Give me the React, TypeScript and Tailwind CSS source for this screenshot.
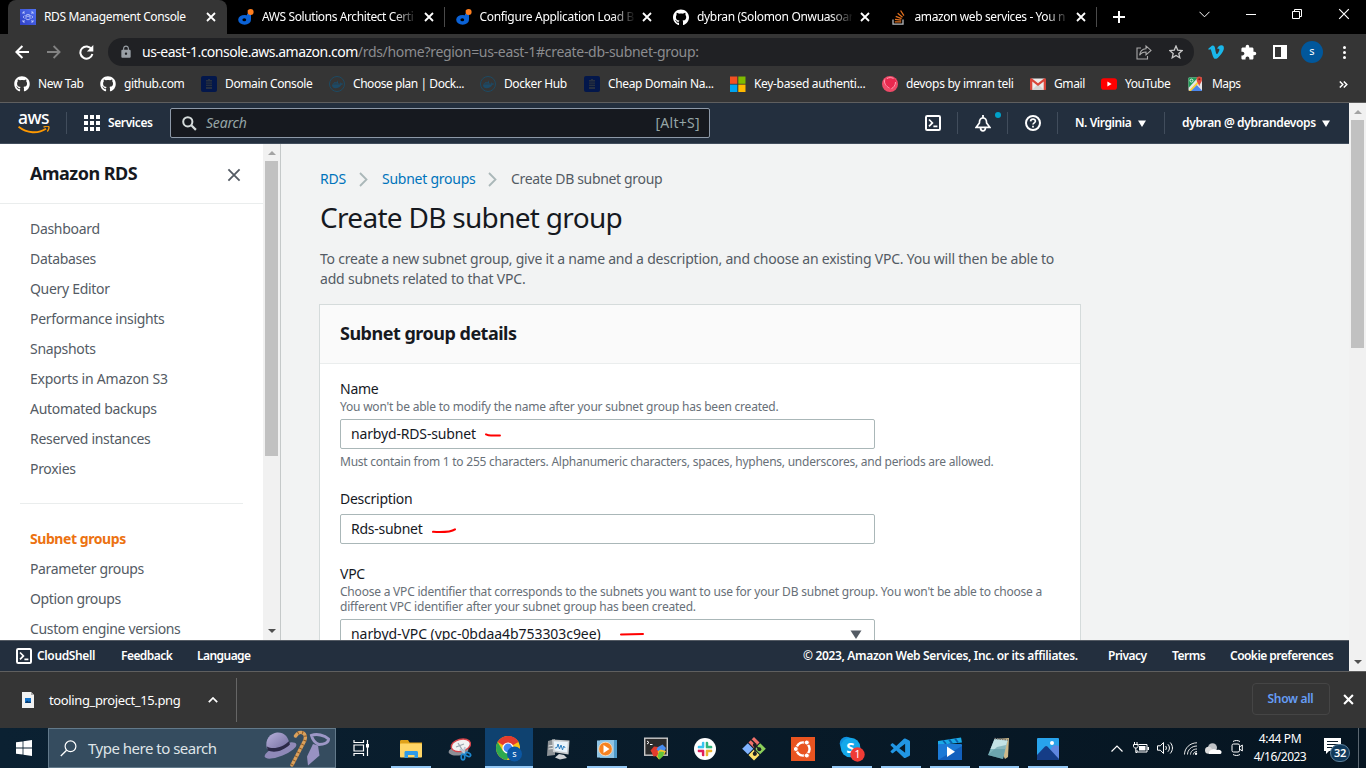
import React from "react";
import { FaGithub, FaDocker, FaVimeoV, FaStackOverflow } from "react-icons/fa";
import { MdExtension, MdLock } from "react-icons/md";
import { VscVscode } from "react-icons/vsc";

/* ---------- small shared glyphs ---------- */

const Close = ({ s = 10, w = 1.8, c = "#fff" }: { s?: number; w?: number; c?: string }) => (
  <svg width={s} height={s} viewBox="0 0 10 10" className="shrink-0">
    <path d="M1 1l8 8M9 1l-8 8" stroke={c} strokeWidth={w} fill="none" />
  </svg>
);

const ShellIcon = () => (
  <svg width="16" height="16" viewBox="0 0 16 16" className="shrink-0">
    <rect x="1" y="1" width="14" height="14" rx="1.2" fill="none" stroke="#fff" strokeWidth="2" />
    <path d="M4 4.5l3.4 3.4L4 11.3M8.4 11.4h4" fill="none" stroke="#fff" strokeWidth="1.7" />
  </svg>
);

const Caret = () => (
  <svg width="8" height="7" viewBox="0 0 8 7" className="shrink-0">
    <path d="M0 .5h8L4 7z" fill="#fff" />
  </svg>
);

const RdsFavicon = () => (
  <svg width="16" height="16" viewBox="0 0 16 16">
    <defs>
      <linearGradient id="rds" x1="0" y1="1" x2="1" y2="0">
        <stop offset="0" stopColor="#2e3fc4" />
        <stop offset="1" stopColor="#5272f2" />
      </linearGradient>
    </defs>
    <rect width="16" height="16" fill="url(#rds)" />
    <g fill="none" stroke="#c9d3ff" strokeWidth=".8">
      <path d="M3 5V3h2M3 3l1.6 1.6M13 5V3h-2M13 3l-1.6 1.6M3 11v2h2M3 13l1.6-1.6M13 11v2h-2M13 13l-1.6-1.6" />
      <ellipse cx="8" cy="6.4" rx="2" ry=".9" />
      <path d="M6 6.4v3.4c0 1.2 4 1.2 4 0V6.4M4.4 6.6L3.2 8l1.2 1.4M11.6 6.6L12.8 8l-1.2 1.4" />
    </g>
  </svg>
);

const OceanFavicon = () => (
  <svg width="16" height="16" viewBox="0 0 16 16">
    <ellipse cx="6.6" cy="10.8" rx="6.4" ry="4.9" fill="#0b62d6" />
    <path d="M9 4.5l4 1v5H9z" fill="#0b62d6" />
    <ellipse cx="6.3" cy="10.8" rx="1.9" ry="1.5" fill="#000" />
    <circle cx="12.6" cy="3" r="3" fill="#ff7f1f" />
    <path d="M9.4 1.2l3 1.2-.6 2.4z" fill="#ff7f1f" />
  </svg>
);

const StackFavicon = () => (
  <svg width="16" height="16" viewBox="0 0 16 16">
    <path d="M2 10.500v4.700h10v-4.700" stroke="#b9bbbe" strokeWidth="1.300" fill="none" />
    <path d="M3.800 12.800h6.400M4 10.300l6.200.9M4.700 7.400l5.900 2.200M6.700 4.300l4.800 4M9.600 1.500l3.300 5.200" stroke="#e0701f" strokeWidth="1.300" />
  </svg>
);

/* ---------- browser chrome ---------- */

const tabs = [
  { icon: <OceanFavicon />, title: "AWS Solutions Architect Certi", track: "tracking-[-0.4px]" },
  { icon: <OceanFavicon />, title: "Configure Application Load B", track: "tracking-[-0.33px]" },
  { icon: <FaGithub size={17} color="#fff" />, title: "dybran (Solomon Onwuasoar", track: "tracking-[-0.33px]" },
  { icon: <StackFavicon />, title: "amazon web services - You n", track: "tracking-[-0.4px]" },
];

const TabStrip = () => (
  <div className="flex h-[34px] bg-black pl-2">
    <div className="flex h-full w-[219px] shrink-0 items-center rounded-t-lg bg-[#353535] pl-3">
      <RdsFavicon />
      <span className="ml-2 w-[162px] whitespace-nowrap text-xs tracking-[-0.37px] text-white">RDS Management Console</span>
      <Close />
    </div>
    {tabs.map((t, i) => (
      <div key={i} className="flex h-full w-[217.5px] shrink-0 items-center pl-[11px]">
        <span className="flex w-4 justify-center">{t.icon}</span>
        <span
          className={`${t.track} ml-2 mr-2 w-[155px] whitespace-nowrap text-xs text-white [mask-image:linear-gradient(to_right,#000_86%,transparent_101%)]`}
        >
          {t.title}
        </span>
        <Close />
        <span className="ml-[10px] h-5 w-px bg-[#4a4a4a]" />
      </div>
    ))}
    <div className="flex flex-1 items-center justify-between pl-[16px] pr-[16px]">
      <svg width="12" height="12" viewBox="0 0 12 12">
        <path d="M6 0v12M0 6h12" stroke="#fff" strokeWidth="2" />
      </svg>
      <div className="flex -translate-y-[3px] items-center gap-[36px]">
        <svg width="11" height="7" viewBox="0 0 11 7">
          <path d="M.5.8l5 5 5-5" stroke="#fff" strokeWidth="1" fill="none" />
        </svg>
        <svg width="10" height="10" viewBox="0 0 10 10">
          <path d="M0 5.5h10" stroke="#fff" />
        </svg>
        <svg width="10" height="10" viewBox="0 0 10 10">
          <path d="M.5 2.5h7v7h-7zM2.5 2.5v-2h7v7h-2" stroke="#fff" fill="none" />
        </svg>
        <Close w={1} s={12} />
      </div>
    </div>
  </div>
);

const Toolbar = () => (
  <div className="flex h-9 items-center bg-[#353535] pl-[15px] text-white">
    <svg width="14" height="14" viewBox="0 0 14 14">
      <path d="M14 7H1.6M7.4 1L1.4 7l6 6" stroke="#fff" strokeWidth="2" fill="none" />
    </svg>
    <svg width="14" height="14" viewBox="0 0 14 14" className="ml-[18px]">
      <path d="M0 7h12.4M6.6 1l6 6-6 6" stroke="#838383" strokeWidth="1.8" fill="none" />
    </svg>
    <svg width="15" height="15" viewBox="0 0 15 15" className="ml-[18px]">
      <path d="M12.6 4.2A6.1 6.1 0 1 0 13.4 9" stroke="#fff" strokeWidth="2" fill="none" />
      <path d="M14.3 0v6.4H7.9z" fill="#fff" />
    </svg>
    <div className="ml-[14px] flex h-7 w-[1086px] items-center rounded-full bg-[#202124] pl-[11px] pr-[11px]">
      <MdLock size={14} color="#9aa0a6" />
      <div className="ml-[9px] flex-1 whitespace-nowrap text-sm">
        <span className="tracking-[-0.5px]">us-east-1.console.aws.amazon.com</span>
        <span className="tracking-[-0.3px] text-[#8b8c8f]">/rds/home?region=us-east-1#create-db-subnet-group:</span>
      </div>
      <svg width="16" height="16" viewBox="0 0 16 16">
        <path d="M5 4H1v11h10.5v-3" stroke="#aaa" strokeWidth="1.1" fill="none" />
        <path d="M3.6 11.2C4 7.2 6.4 5 10 4.8V1.9L15 6.4l-5 4.4V8C7 8 5 9 3.6 11.2z" stroke="#aaa" strokeWidth="1.1" fill="none" />
      </svg>
      <svg width="14" height="14" viewBox="0 0 14 14" className="ml-[17px]">
        <path d="M7 1l1.7 4.1 4.5.4-3.4 2.9 1 4.4L7 10.5l-3.8 2.3 1-4.4L.8 5.5l4.5-.4z" stroke="#c8c8c8" strokeWidth="1.3" fill="none" />
      </svg>
    </div>
    <FaVimeoV size={18} color="#1ab7ea" className="ml-[13px]" />
    <MdExtension size={17} className="ml-[15px]" />
    <svg width="14" height="14" viewBox="0 0 14 14" className="ml-[16px]">
      <path d="M0 0h14v14H0zM2 2v10h6V2z" fill="#fff" fillRule="evenodd" />
    </svg>
    <span className="ml-[14px] flex h-[22px] w-[22px] items-center justify-center rounded-full bg-[#01579b] pb-0.5 text-[11px]">s</span>
    <span className="ml-[20px] flex flex-col gap-0.5">
      <i className="h-[3px] w-[3px] rounded-full bg-white" />
      <i className="h-[3px] w-[3px] rounded-full bg-white" />
      <i className="h-[3px] w-[3px] rounded-full bg-white" />
    </span>
  </div>
);

const DomainIcon = () => (
  <svg width="16" height="16" viewBox="0 0 16 16">
    <rect width="16" height="16" rx="2" fill="#03174b" />
    <path d="M5 4h6v9H5zM7 3h2v1H7z" fill="#283142" />
    <path d="M5 6h6M5 8.2h6M5 10.5h6" stroke="#0b1a3d" />
  </svg>
);

const DockerIcon = () => (
  <span className="flex h-4 w-4 items-center justify-center rounded-full border border-[#1d4a63]">
    <FaDocker size={11} color="#1d4a66" />
  </span>
);

const MicrosoftIcon = () => (
  <svg width="16" height="16" viewBox="0 0 16 16">
    <path d="M0 .5h7.3v7.3H0z" fill="#f25022" />
    <path d="M8.3.5h7.2v7.3H8.3z" fill="#7fba00" />
    <path d="M0 8.6h7.3V16H0z" fill="#00a4ef" />
    <path d="M8.3 8.6h7.2V16H8.3z" fill="#ffb900" />
  </svg>
);

const PinkBall = () => (
  <svg width="16" height="16" viewBox="0 0 16 16">
    <circle cx="8" cy="8" r="8" fill="#f04a68" />
    <circle cx="8.600" cy="6.800" r="5.600" fill="#e9284e" />
    <path d="M2.400 3.600C2 7 4 10.500 7.500 12M13.500 6c0 3-1.500 5.500-4 6.500M5 2.500c2-1.200 4.500-1.200 6.500 0" stroke="#ff9fb3" strokeWidth="1" fill="none" />
  </svg>
);

const GmailIcon = () => (
  <svg width="16" height="16" viewBox="0 0 16 16">
    <rect x="1" y="2.5" width="14" height="11.5" rx="1" fill="#ececec" />
    <path d="M2 14l6-6 6 6z" fill="#d4d4d4" />
    <path d="M0 3.6v9.6c0 .6.4.9 1 .9h1.3V5.6L8 10l5.700-4.400v8.500H15c.6 0 1-.4 1-.9V3.600c0-1.200-1-1.500-2-1.100L8 7.200 2 2.500c-1-.4-2-.1-2 1.100z" fill="#d9453a" />
  </svg>
);

const YoutubeIcon = () => (
  <svg width="16" height="16" viewBox="0 0 16 16">
    <rect y="2.300" width="16" height="11.400" rx="2.800" fill="#f00" />
    <path d="M6.400 5.600v4.800L10.600 8z" fill="#fff" />
  </svg>
);

const MapsIcon = () => (
  <svg width="16" height="16" viewBox="0 0 16 16">
    <rect x=".5" y="1.500" width="13.500" height="13.500" rx="1" fill="#e6e6e6" />
    <path d="M.5 2c0-.4.3-.5.6-.5H10L.5 12z" fill="#1f9d58" />
    <path d="M1.500 15L8 8.300l6 6.200c-.3.400-.5.500-1 .5z" fill="#4a86ee" />
    <path d="M1 14.800L12 3l1.500 1.500L3 15H1.500z" fill="#fbce32" />
    <path d="M4 15l4.200-4.400L12.500 15z" fill="#4a86ee" />
    <path d="M11.200 10.500C10.800 7.500 8.500 6.200 8.500 3.300a2.800 2.800 0 0 1 5.600 0c0 2.900-2.400 4.200-2.900 7.200z" fill="#dc4a3d" />
    <circle cx="11.300" cy="3.300" r="1" fill="#7a1d14" />
    <circle cx="3.500" cy="4.600" r="1.500" fill="none" stroke="#fff" strokeWidth=".8" />
  </svg>
);

const bookmarks = [
  { icon: <FaGithub size={16} />, text: "New Tab", cls: "w-[86px] tracking-[-0.35px]" },
  { icon: <FaGithub size={16} />, text: "github.com", cls: "w-[101px] tracking-[-0.42px]" },
  { icon: <DomainIcon />, text: "Domain Console", cls: "w-[128px] tracking-[-0.38px]" },
  { icon: <DockerIcon />, text: "Choose plan | Dock...", cls: "w-[151px] tracking-[-0.45px]" },
  { icon: <DockerIcon />, text: "Docker Hub", cls: "w-[104px] tracking-[-0.4px]" },
  { icon: <DomainIcon />, text: "Cheap Domain Na...", cls: "w-[146px] tracking-[-0.36px]" },
  { icon: <MicrosoftIcon />, text: "Key-based authenti...", cls: "w-[152px] tracking-[-0.33px]" },
  { icon: <PinkBall />, text: "devops by imran teli", cls: "w-[148px] tracking-[-0.3px]" },
  { icon: <GmailIcon />, text: "Gmail", cls: "w-[71px] tracking-[-0.4px]" },
  { icon: <YoutubeIcon />, text: "YouTube", cls: "w-[87px] tracking-[-0.46px]" },
  { icon: <MapsIcon />, text: "Maps", cls: "w-[100px] tracking-[-0.55px]" },
];

const Bookmarks = () => (
  <div className="flex h-[33px] items-center border-b border-[#5f5f5f] bg-[#353535] pb-1 pl-3.5 text-xs text-white">
    {bookmarks.map((b, i) => (
      <div key={i} className={`${b.cls} flex shrink-0 items-center gap-2 whitespace-nowrap`}>
        {b.icon}
        <span>{b.text}</span>
      </div>
    ))}
    <svg width="9" height="7" viewBox="0 0 9 7" className="ml-[51px]">
      <path d="M.8.500l3 3-3 3M4.800.500l3 3-3 3" stroke="#fff" strokeWidth="1.500" fill="none" />
    </svg>
  </div>
);

/* ---------- AWS console ---------- */

const Sep = ({ cls }: { cls: string }) => <span className={`${cls} h-[22px] w-px shrink-0 bg-[#414d5c]`} />;

const ConsoleNav = () => (
  <div className="flex h-[41px] items-center border-b border-[#414d5c] bg-[#232f3e] pl-[18px] text-xs font-semibold text-white">
    <div className="flex w-[31px] flex-col items-center">
      <span className="h-[14px] text-[17.5px] font-medium leading-[11px] tracking-[-0.6px]">aws</span>
      <svg width="32" height="8" viewBox="0 0 32 8">
        <path d="M.5.800C9 7.500 20 8 28 2.800" stroke="#f90" strokeWidth="1.900" fill="none" />
        <path d="M25.500 1.200C28 .2 30.500.300 30.900.900 31.300 1.600 30.500 4.200 29.300 5.500" stroke="#f90" strokeWidth="1.300" fill="none" />
      </svg>
    </div>
    <Sep cls="ml-[17px]" />
    <svg width="16" height="16" viewBox="0 0 16 16" className="ml-[17px]">
      {[0, 6, 12].map((y) => [0, 6, 12].map((x) => <rect key={`${x}-${y}`} x={x} y={y} width="4" height="4" fill="#fff" />))}
    </svg>
    <span className="ml-2 w-[45px] tracking-[-0.4px]">Services</span>
    <div className="ml-[17px] flex h-[30px] w-[540px] items-center rounded-[2px] border border-[#8d99a8] bg-[#16191f] pl-[11px] pr-[9px] text-sm font-normal text-[#95a5a6]">
      <svg width="15" height="15" viewBox="0 0 15 15">
        <circle cx="5.800" cy="5.800" r="4.600" stroke="#d5dbdb" strokeWidth="2" fill="none" />
        <path d="M9.300 9.300l4.600 4.600" stroke="#d5dbdb" strokeWidth="2.200" />
      </svg>
      <span className="ml-[9px] flex-1 italic tracking-[-0.2px]">Search</span>
      <span className="tracking-[0.3px]">[Alt+S]</span>
    </div>
    <div className="flex flex-1 items-center pl-[215px]">
      <ShellIcon />
      <Sep cls="ml-[16px]" />
      <span className="relative ml-[17px]">
        <svg width="16" height="17" viewBox="0 0 16 17">
          <path d="M1.200 12.300h13.600L11.600 8C11.600 5.200 10.500 3 8 3S4.400 5.200 4.400 8z" fill="none" stroke="#fff" strokeWidth="1.700" />
          <path d="M8 0v3M5.600 13c0 3.800 4.800 3.800 4.800 0" stroke="#fff" strokeWidth="1.800" fill="none" />
        </svg>
        <i className="absolute -top-[3px] left-[20px] h-1.5 w-1.5 rounded-full bg-[#00a1c9]" />
      </span>
      <Sep cls="ml-[16px]" />
      <svg width="16" height="16" viewBox="0 0 16 16" className="ml-[17px] shrink-0">
        <circle cx="8" cy="8" r="7" fill="none" stroke="#fff" strokeWidth="2" />
        <path d="M5.600 6.400C5.700 3.400 10.500 3.400 10.400 6.300 10.300 7.800 8 7.900 8 9.600M8 10.700v1.700" stroke="#fff" strokeWidth="1.700" fill="none" />
      </svg>
      <Sep cls="ml-[16px]" />
      <span className="ml-[17px] w-[63px] whitespace-nowrap tracking-[-0.42px]">N. Virginia</span>
      <Caret />
      <Sep cls="ml-[18px]" />
      <span className="ml-[17px] w-[140px] whitespace-nowrap tracking-[-0.35px]">dybran @ dybrandevops</span>
      <Caret />
    </div>
  </div>
);

const nav1 = [
  "Dashboard",
  "Databases",
  "Query Editor",
  "Performance insights",
  "Snapshots",
  "Exports in Amazon S3",
  "Automated backups",
  "Reserved instances",
  "Proxies",
];
const nav2 = ["Subnet groups", "Parameter groups", "Option groups", "Custom engine versions"];

const Arrow = ({ up, c }: { up?: boolean; c: string }) => (
  <svg width="8" height="4" viewBox="0 0 8 4">
    <path d={up ? "M0 4h8L4 0z" : "M0 0h8L4 4z"} fill={c} />
  </svg>
);

const Sidebar = () => (
  <div className="flex w-[281px] shrink-0 border-r border-[#c5c9c9] bg-white">
    <div className="w-[263px] overflow-hidden">
      <div className="flex h-[60px] items-center justify-between border-b border-[#eaeded] pl-[30px] pr-[22px]">
        <span className="pb-0.5 text-lg font-bold tracking-[-0.5px] text-[#16191f]">Amazon RDS</span>
        <span className="pt-0.5">
          <Close s={14} w={1.300} c="#545b64" />
        </span>
      </div>
      <div className="flex flex-col gap-2.5 pl-[30px] pt-[15px] text-sm leading-5 tracking-[-0.31px] text-[#545b64]">
        {nav1.map((t) => (
          <span key={t} className={t.startsWith("Exports") ? "tracking-[-0.23px]" : ""}>
            {t}
          </span>
        ))}
      </div>
      <div className="mx-5 mt-6 h-px bg-[#eaeded]" />
      <div className="flex flex-col gap-2.5 pl-[30px] pt-[25px] text-sm leading-5 tracking-[-0.36px] text-[#545b64]">
        {nav2.map((t, i) => (
          <span key={t} className={i === 0 ? "font-bold tracking-[-0.43px] text-[#ec7211]" : ""}>
            {t}
          </span>
        ))}
      </div>
    </div>
    <div className="flex w-[17px] flex-col items-center justify-between bg-[#f1f1f1] py-[7px]">
      <div className="flex flex-col items-center gap-1.5">
        <Arrow up c="#a3a3a3" />
        <div className="h-[295px] w-[13px] bg-[#c1c1c1]" />
      </div>
      <Arrow c="#505050" />
    </div>
  </div>
);

const Chevron = ({ cls }: { cls: string }) => (
  <svg width="9" height="15" viewBox="0 0 9 15" className={cls}>
    <path d="M1 1l6.500 6.500L1 14" stroke="#aab7b8" strokeWidth="1.800" fill="none" />
  </svg>
);

const Label = ({ children }: { children: string }) => (
  <div className="text-sm leading-5 tracking-[-0.26px] text-[#16191f]">{children}</div>
);
const Hint = ({ children, cls = "tracking-[-0.21px]" }: { children: React.ReactNode; cls?: string }) => (
  <div className={`${cls} whitespace-nowrap text-xs leading-[15px] text-[#687078]`}>{children}</div>
);

const field =
  "flex h-[30px] w-[535px] items-center rounded-[2px] border border-[#aab7b8] bg-white pl-2.5 text-sm text-[#16191f]";

const Main = () => (
  <div className="flex-1 overflow-hidden bg-[#f2f3f3] pl-[38px] text-[#16191f]">
    <div className="ml-px mt-[25px] flex h-5 items-center whitespace-nowrap text-sm leading-5 text-[#0073bb]">
      <span className="w-[26px] tracking-[-0.26px]">RDS</span>
      <Chevron cls="ml-[13px] mr-[14px]" />
      <span className="w-[93px] tracking-[-0.25px]">Subnet groups</span>
      <Chevron cls="ml-[13px] mr-[14px]" />
      <span className="tracking-[-0.34px] text-[#545b64]">Create DB subnet group</span>
    </div>
    <h1 className="ml-px mt-[10px] text-[28px] font-normal leading-9 tracking-[-0.7px]">Create DB subnet group</h1>
    <p className="ml-px mt-[14px] whitespace-nowrap text-sm leading-5 tracking-[-0.22px] text-[#545b64]">
      To create a new subnet group, give it a name and a description, and choose an existing VPC. You will then be able to
      <br />
      <span className="tracking-[-0.19px]">add subnets related to that VPC.</span>
    </p>
    <div className="mt-[15px] h-[500px] w-[762px] border border-[#d5dbdb] bg-white">
      <div className="flex h-[59px] items-center border-b border-[#eaeded] bg-[#fafafa] pb-0.5 pl-5 text-lg font-bold tracking-[-0.5px]">
        Subnet group details
      </div>
      <div className="px-5 pt-[15px]">
        <Label>Name</Label>
        <Hint>You won't be able to modify the name after your subnet group has been created.</Hint>
        <div className={`${field} mt-[5px]`}>
          <span className="tracking-[-0.16px]">narbyd-RDS-subnet</span>
          <svg width="16" height="4" viewBox="0 0 16 4" className="ml-[9px] mt-[2px]">
            <path d="M1 1.300c2 1 3 1.200 5 1.200h9" stroke="#f00" strokeWidth="1.900" strokeLinecap="round" fill="none" />
          </svg>
        </div>
        <div className="mt-[5px]">
          <Hint cls="tracking-[-0.24px]">
            Must contain from 1 to 255 characters. Alphanumeric characters, spaces, hyphens, underscores, and periods are allowed.
          </Hint>
        </div>
        <div className="mt-5">
          <Label>Description</Label>
        </div>
        <div className={`${field} mt-[5px]`}>
          <span className="tracking-[-0.26px]">Rds-subnet</span>
          <svg width="24" height="7" viewBox="0 0 24 7" className="ml-[9px] mt-[2px]">
            <path d="M1 4.800c6 .3 17 .9 22-2.500" stroke="#f00" strokeWidth="2" strokeLinecap="round" fill="none" />
          </svg>
        </div>
        <div className="mt-5">
          <Label>VPC</Label>
        </div>
        <Hint>
          Choose a VPC identifier that corresponds to the subnets you want to use for your DB subnet group. You won't be able to
          choose a
          <br />
          different VPC identifier after your subnet group has been created.
        </Hint>
        <div className={`${field} mt-[5px] pr-3`}>
          <span className="tracking-[-0.06px]">narbyd-VPC (vpc-0bdaa4b753303c9ee)</span>
          <svg width="24" height="4" viewBox="0 0 24 4" className="ml-[19px]">
            <path d="M1 2.400L23 2" stroke="#f00" strokeWidth="2" strokeLinecap="round" />
          </svg>
          <svg width="12" height="9" viewBox="0 0 12 9" className="ml-auto">
            <path d="M.5.500h11L6 9z" fill="#545b64" />
          </svg>
        </div>
      </div>
    </div>
  </div>
);

const ConsoleFooter = () => (
  <div className="flex h-[31px] items-center border-t border-[#545b64] bg-[#232f3e] pl-4 text-xs font-semibold text-white">
    <ShellIcon />
    <span className="ml-[5px] w-[59px] tracking-[-0.36px]">CloudShell</span>
    <span className="ml-[25px] w-[51px] tracking-[-0.55px]">Feedback</span>
    <span className="ml-[25px] flex-1 tracking-[-0.55px]">Language</span>
    <span className="w-[275px] whitespace-nowrap tracking-[-0.34px]">© 2023, Amazon Web Services, Inc. or its affiliates.</span>
    <span className="ml-[30px] w-[39px] tracking-[-0.5px]">Privacy</span>
    <span className="ml-[25px] w-[33px] tracking-[-0.5px]">Terms</span>
    <span className="ml-[25px] w-[119px] whitespace-nowrap tracking-[-0.53px]">Cookie preferences</span>
  </div>
);

const PageScrollbar = () => (
  <div className="flex w-[17px] flex-col items-center justify-between bg-[#f1f1f1] py-[7px]">
    <div className="flex flex-col items-center gap-1.5">
      <Arrow up c="#a3a3a3" />
      <div className="h-[228px] w-[13px] bg-[#c1c1c1]" />
    </div>
    <Arrow c="#505050" />
  </div>
);

/* ---------- download shelf ---------- */

const Downloads = () => (
  <div className="flex h-[57px] items-center border-t border-[#5f5f5f] bg-[#353535] pl-[22px] text-white">
    <svg width="12" height="16" viewBox="0 0 12 16">
      <path d="M0 0h9l3 3v13H0z" fill="#f2f2f2" />
      <path d="M9 0l3 3H9z" fill="#aaa" />
      <path d="M3 6h6v5H3z" fill="#1673c8" />
      <path d="M3 11l2-2.500L7 10l1-1 1 2z" fill="#0b3a6b" />
    </svg>
    <span className="ml-[15px] w-[132px] pt-0.5 text-[13px] tracking-[-0.38px]">tooling_project_15.png</span>
    <svg width="10" height="6" viewBox="0 0 10 6" className="ml-[27px]">
      <path d="M.8 5.200L5 1l4.200 4.200" stroke="#fff" strokeWidth="1.700" fill="none" />
    </svg>
    <span className="ml-[18px] h-11 w-px bg-[#666]" />
    <span className="ml-auto mb-0.5 flex h-8 w-[78px] items-center justify-center rounded border border-[#454545] text-xs font-semibold tracking-[-0.3px] text-[#669df6]">
      Show all
    </span>
    <span className="mb-0.5 ml-[13px] mr-[12.5px] flex">
      <Close s={11} w={1.900} />
    </span>
  </div>
);

/* ---------- taskbar ---------- */

const FolderIcon = () => (
  <svg width="22" height="18" viewBox="0 0 22 18">
    <path d="M0 1.500C0 .7.500 0 1.200 0H8l1.600 2.500H22V9H0z" fill="#e0a21a" />
    <rect y="3.500" width="22" height="14" rx=".8" fill="#ffd667" />
    <path d="M4.500 18v-5.500c0-1 .6-1.500 1.500-1.500h10.500c.9 0 1.500.5 1.500 1.500V18h-3.500v-3H8v3z" fill="#2f9be8" />
  </svg>
);

const SnipIcon = () => (
  <svg width="24" height="24" viewBox="0 0 24 24">
    <ellipse cx="10.500" cy="14" rx="10" ry="4.500" fill="#8c8f96" transform="rotate(-8 10 14)" />
    <ellipse cx="13" cy="8.500" rx="9.800" ry="6" fill="#f2f2f2" stroke="#d8454b" strokeWidth="1.400" transform="rotate(-14 12 9)" />
    <path d="M8 10l8-3M10 6l5 8" stroke="#9aa4ae" strokeWidth="1.200" />
    <path d="M12 12l6 5M17 10l-2 8" stroke="#b9c8d6" strokeWidth="1.800" />
    <ellipse cx="15" cy="20" rx="1.800" ry="2.800" fill="none" stroke="#1c87cf" strokeWidth="1.700" />
    <ellipse cx="20" cy="17.500" rx="2.800" ry="1.800" fill="none" stroke="#1c87cf" strokeWidth="1.700" transform="rotate(30 20 17.500)" />
  </svg>
);

const ChromeIcon = () => (
  <svg width="26" height="26" viewBox="0 0 26 26">
    <circle cx="12" cy="12" r="12" fill="#fbc116" />
    <path d="M12 12L1.600 6A12 12 0 0 1 22.400 6z" fill="#e33b2e" />
    <path d="M12 0a12 12 0 0 1 10.400 6H12z" fill="#e33b2e" />
    <path d="M1.600 6a12 12 0 0 0 9 17.900L17 15l-10 0z" fill="#2da94f" />
    <circle cx="12" cy="12" r="5.600" fill="#fff" />
    <circle cx="12" cy="12" r="4.400" fill="#4285f4" />
    <circle cx="18.500" cy="18" r="7.500" fill="#0b57a4" />
    <text x="18.500" y="21" fontSize="9" fill="#fff" textAnchor="middle">s</text>
  </svg>
);

const PerfIcon = () => (
  <svg width="23" height="22" viewBox="0 0 23 22">
    <path d="M1 3l7-2v16l-8 1z" fill="#8d9296" />
    <path d="M1.500 8l5-.8M1.500 11l5-.6" stroke="#e6e6e6" />
    <path d="M5 1.500L22.500 2.500l-1 14L6 14z" fill="#c9ccce" />
    <path d="M6.800 3.200l14 .9-.8 10.400L7.500 12.500z" fill="#eaf4fb" />
    <path d="M8 10l2-.5 1-3.500 1.500 5 1.500-4 1.500 5 1.200-4 1.500 2" stroke="#2f7fbf" fill="none" />
    <path d="M12 16l5 1 3 3-7 1.500-5-2z" fill="#d0d3d6" />
  </svg>
);

const MediaIcon = () => (
  <svg width="20" height="20" viewBox="0 0 20 20">
    <path d="M3 1h17v18H3z" fill="#4e9ac9" />
    <path d="M0 1.500L17 1v18L0 18.500z" fill="#8fc4e4" />
    <circle cx="8.500" cy="10" r="6.800" fill="#f58220" stroke="#fde3c8" strokeWidth=".8" />
    <path d="M6.500 6l6 4-6 4z" fill="#fff" />
  </svg>
);

const TermIcon = () => (
  <svg width="24" height="24" viewBox="0 0 24 24">
    <rect x=".7" y="1.200" width="22.600" height="17" fill="#2c2c2c" stroke="#c9c9c9" strokeWidth="1.400" />
    <path d="M3 4l2 1.500L3 7M6 7.500h2.500" stroke="#fff" fill="none" />
    <path d="M6.500 13.500l3.500-4 4 .5 2.500 4-5.500 4.500z" fill="#e23b2c" />
    <path d="M14 10l4.500-2.500L22 11l-1.500 3.500-5 .5-3-2.500z" fill="#4a8df0" />
    <path d="M12.500 15.500l4-3 5.500 1.500-2 4-5 4.500-3.500-4z" fill="#f3c32b" />
    <path d="M15.500 14.500l4.500.5-.5 3.500-4 4-2-3.500z" fill="#63c53b" />
    <path d="M7 14l4-1 3.500 3-1.500 3-3.500.500z" fill="#e23b2c" />
  </svg>
);

const SlackIcon = () => (
  <svg width="22" height="22" viewBox="0 0 22 22">
    <circle cx="11" cy="11" r="11" fill="#fff" />
    <g strokeWidth="2.700" strokeLinecap="round">
      <path d="M9.200 5v3.800M5 9.200h4" stroke="#36c5f0" />
      <path d="M12.900 5v3.800M12.900 9.200H17" stroke="#2eb67d" />
      <path d="M12.900 17v-3.800M13 12.900h4" stroke="#ecb22e" />
      <path d="M9.200 17v-3.800M5 12.900h4" stroke="#e01e5a" />
    </g>
    <path d="M11 4.500v13M4.500 11h13" stroke="#fff" strokeWidth=".8" />
  </svg>
);

const GitIcon = () => (
  <svg width="24" height="24" viewBox="0 0 24 24">
    <path d="M12 0l5.500 5.500L12 11 6.500 5.500z" fill="#f0716b" />
    <path d="M5.800 6.200l5.500 5.500-5.500 5.600L.2 11.700z" fill="#80b3ff" />
    <path d="M18.200 6.200l5.600 5.500-5.600 5.600-5.500-5.600z" fill="#8ccf5a" />
    <path d="M12 12.400l5.500 5.600L12 23.600 6.500 18z" fill="#ffe16b" />
    <path d="M9 2.500l4 4v11M13 8l4.500 4.500" stroke="#1c1f24" strokeWidth="1.500" fill="none" />
    <circle cx="12.800" cy="8" r="2" fill="#1c1f24" />
    <circle cx="17.300" cy="12.300" r="2" fill="#1c1f24" />
    <circle cx="12.800" cy="16.800" r="2.100" fill="#1c1f24" />
  </svg>
);

const UbuntuIcon = () => (
  <svg width="24" height="24" viewBox="0 0 24 24">
    <rect width="24" height="24" fill="#e95420" />
    <circle cx="12" cy="12" r="6.600" fill="none" stroke="#fff" strokeWidth="2.400" />
    <g fill="#fff" stroke="#e95420" strokeWidth="1">
      <circle cx="4.800" cy="12" r="2.500" />
      <circle cx="15.800" cy="5.500" r="2.500" />
      <circle cx="15.800" cy="18.500" r="2.500" />
    </g>
  </svg>
);

const SkypeIcon = () => (
  <svg width="26" height="26" viewBox="0 0 26 26">
    <circle cx="7.500" cy="7.500" r="6.800" fill="#0f8fdc" />
    <circle cx="15.500" cy="15.500" r="6.500" fill="#0f8fdc" />
    <circle cx="11.500" cy="11.500" r="9.800" fill="#14a8ea" />
    <text x="11.500" y="17" fontSize="15" fontWeight="700" fill="#fff" textAnchor="middle">S</text>
    <circle cx="18.500" cy="18.500" r="7.200" fill="#ef3b35" />
    <text x="18.500" y="22.300" fontSize="10.500" fill="#fff" textAnchor="middle">1</text>
  </svg>
);

const MoviesIcon = () => (
  <svg width="24" height="24" viewBox="0 0 24 24">
    <path d="M0 4L23 .5l1 5L0 8z" fill="#1aa9e6" />
    <path d="M5 3.300L8 7M11 2.400L14 6.400M17 1.400L20 5.600" stroke="#0b5ea8" strokeWidth="1.800" />
    <rect y="7" width="24" height="16" rx="1" fill="#1c7ad6" />
    <path d="M0 23h24V9z" fill="#1260bd" />
    <path d="M9 9.500v10.500l8-5.200z" fill="#fff" />
  </svg>
);

const NotepadIcon = () => (
  <svg width="24" height="24" viewBox="0 0 24 24">
    <path d="M8 2l14-1-1 19-3 2z" fill="#cdb98a" />
    <path d="M7.500 2L20.500 3.500 16 22 1 18z" fill="#7fb6bd" />
    <path d="M7.500 2L20.500 3.500 18 12 3.500 12z" fill="#c3e3e6" />
    <path d="M1 18L10 10l9-2-3 14z" fill="#5f9aa3" opacity=".6" />
    <path d="M7.500 1.500L21 3" stroke="#777" strokeWidth="1.500" strokeDasharray="1.500 1" />
  </svg>
);

const PhotosIcon = () => (
  <svg width="22" height="22" viewBox="0 0 22 22">
    <rect width="22" height="22" rx="1" fill="#28a3ec" />
    <path d="M22 8v13H8l7-12c2-2 4-2 7-1z" fill="#5f86e0" />
    <path d="M0 17l8-8.500c.8-.8 1.600-.8 2.400 0L22 21c0 .600-.400 1-1 1H1c-.600 0-1-.400-1-1z" fill="#153c86" />
    <circle cx="15" cy="5" r="2" fill="#fff" />
  </svg>
);

const apps = [
  { el: <FolderIcon />, on: true },
  { el: <SnipIcon /> },
  { el: <ChromeIcon />, on: true, active: true },
  { el: <PerfIcon /> },
  { el: <MediaIcon />, on: true },
  { el: <TermIcon /> },
  { el: <SlackIcon /> },
  { el: <GitIcon /> },
  { el: <UbuntuIcon /> },
  { el: <SkypeIcon />, on: true },
  { el: <VscVscode size={24} color="#2196e3" />, on: true },
  { el: <MoviesIcon />, on: true },
  { el: <NotepadIcon />, on: true },
  { el: <PhotosIcon />, on: true },
];

const SearchArt = () => (
  <svg width="70" height="38" viewBox="0 0 70 38" className="shrink-0">
    <defs>
      <linearGradient id="hat" x1="0" y1="0" x2="1" y2="1">
        <stop offset="0" stopColor="#b9b1dc" />
        <stop offset="1" stopColor="#6f6a9c" />
      </linearGradient>
    </defs>
    <ellipse cx="17.500" cy="21.500" rx="17" ry="5.500" fill="#8f89b8" transform="rotate(-22 17.500 21.500)" />
    <path d="M4 20C1 10 8 4 14 3.500c7-.5 11 4 12.500 11-6 6-16 9-22.500 5.500z" fill="url(#hat)" />
    <path d="M4 17.500c6 3.500 16 1 22.200-5.500l.7 3.500C20 22.500 10 24.500 4.500 21z" fill="#2b2947" />
    <path d="M29 36L41.500 12c3.500-8-4.500-12-9-5" stroke="#d9a05c" strokeWidth="3.400" fill="none" strokeLinecap="round" />
    <path d="M29 36L41.500 12c3.500-8-4.500-12-9-5" stroke="#8f5b25" strokeWidth="3.400" fill="none" strokeDasharray="1 3.500" />
    <path d="M48.500 6.500c5-2 13-.5 17 3.500 0 4-5 5.500-9.500 5.500-4-1.500-6.500-5-7.500-9z" fill="none" stroke="#9d97c6" strokeWidth="3" />
    <path d="M50 15l5 1.500 1.500 10L45 36.500l-1-9z" fill="#9992c2" />
  </svg>
);

const Taskbar = () => (
  <div className="flex h-10 items-center bg-[#081b29] bg-linear-to-r from-[#0b2132] to-[#061521] text-white">
    <div className="flex w-12 justify-center">
      <svg width="16" height="16" viewBox="0 0 16 16">
        <path d="M0 2.300L6.600 1.400v6.200H0zM7.400 1.300L16 0v7.600H7.400zM0 8.400h6.600v6.200L0 13.700zM7.400 8.400H16V16l-8.600-1.200z" fill="#fff" />
      </svg>
    </div>
    <div className="flex h-full w-72 items-center border border-[#62798a] bg-[#354c5f] pl-[11px] pr-[2px]">
      <svg width="17" height="17" viewBox="0 0 17 17">
        <circle cx="10.500" cy="6.300" r="5.400" stroke="#fff" strokeWidth="1.200" fill="none" />
        <path d="M6.600 10.200L.8 16" stroke="#fff" strokeWidth="1.300" />
      </svg>
      <span className="ml-[11px] flex-1 whitespace-nowrap text-[15px] tracking-[-0.5px] text-[#dfe4e8]">Type here to search</span>
      <SearchArt />
    </div>
    <div className="flex w-[50.5px] justify-center">
      <svg width="17" height="16" viewBox="0 0 17 16">
        <path d="M1 0v2.500h9.500V0M1 16v-2.500h9.500V16M1 5h9.500v6H1zM14.500 0v16" stroke="#fff" strokeWidth="1.200" fill="none" />
        <rect x="13" y="4" width="3" height="3.500" fill="#fff" />
      </svg>
    </div>
    {apps.map((a, i) => (
      <div
        key={i}
        className={`flex h-full shrink-0 flex-col items-center ${a.active ? "mx-[0.5px] w-12 bg-[#0f4270]" : "w-[49px]"}`}
      >
        <div className="flex h-[38px] items-center pt-[3px]">{a.el}</div>
        {a.on && <div className={`h-0.5 bg-[#94c8f5] ${a.active ? "w-full" : "w-10"}`} />}
      </div>
    ))}
    <div className="flex flex-1 items-center">
      <svg width="12" height="7" viewBox="0 0 12 7" className="ml-[38.5px]">
        <path d="M.5 6.500L6 1l5.500 5.500" stroke="#fff" strokeWidth="1.200" fill="none" />
      </svg>
      <svg width="16" height="12" viewBox="0 0 16 12" className="ml-[10px] shrink-0">
        <path d="M5.500 2.500H14v7.500H4V8" stroke="#fff" fill="none" />
        <path d="M6 4h6.500v4.500H6zM14.500 5H16v3h-1.500z" fill="#fff" />
        <path d="M1.500 0v2.500M4 0v2.500M.5 2.500h4.500v2c0 2-4.500 2-4.500 0zM2.800 6v4.500H4" stroke="#fff" fill="none" />
      </svg>
      <svg width="17" height="14" viewBox="0 0 17 14" className="ml-[8px] shrink-0">
        <path d="M.5 4.800h2.800L6.500 1.500v11L3.300 9.200H.5z" stroke="#fff" fill="none" />
        <path d="M8.600 5c1 1.200 1 2.800 0 4M10.900 3.300c2 2.200 2 5.200 0 7.400M13.200 1.500c3 3.300 3 7.700 0 11" stroke="#fff" fill="none" />
      </svg>
      <svg width="14" height="13" viewBox="0 0 14 13" className="ml-[10px] shrink-0">
        <path d="M.5 12.500C.5 6 6 .8 13 .8M3.500 12.500C3.500 8 7.500 4 13 4M6.500 12.500C6.500 9.500 9 7 13 7M9.300 12.500c0-1.500 1.500-3 3.700-3" stroke="#e8e8e8" fill="none" />
        <circle cx="12" cy="11.800" r="1.200" fill="#fff" />
      </svg>
      <svg width="17" height="11" viewBox="0 0 17 11" className="ml-[7px] shrink-0">
        <circle cx="7.500" cy="4.800" r="4.500" fill="#bfc3c6" />
        <circle cx="3.500" cy="7.300" r="3.500" fill="#dcdcdc" />
        <path d="M4 11c-1-4 5-6 8-4 3-1 5 1 4.500 2.500 0 1-1 1.500-2 1.500z" fill="#fff" />
      </svg>
      <svg width="12" height="16" viewBox="0 0 12 16" className="ml-[9px] shrink-0">
        <path d="M2 1.500c2-1.300 5-1.300 7 0M2 14.500c2 1.300 5 1.300 7 0" stroke="#fff" fill="none" />
        <rect x="1" y="4" width="7.500" height="8" rx="1.500" stroke="#fff" fill="none" />
        <path d="M8.500 7L11.300 5v6L8.500 9" stroke="#fff" fill="none" />
      </svg>
      <div className="ml-[9px] flex w-[56px] shrink-0 flex-col items-center whitespace-nowrap text-xs leading-[18px] tracking-[-0.4px]">
        <span>4:44 PM</span>
        <span className="tracking-[-0.5px]">4/16/2023</span>
      </div>
      <div className="relative ml-[16px] h-[30px] w-[28px] shrink-0 pt-[5px]">
        <svg width="17" height="16" viewBox="0 0 17 16">
          <path d="M0 0h17v13H5l-3 3v-3H0z" fill="#fff" />
          <path d="M3 3.500h11M3 6.500h11M3 9.500h7" stroke="#0a1c2a" />
        </svg>
        <span className="absolute left-[6px] top-[11px] flex h-[18px] w-[20px] items-center justify-center rounded-full border border-[#5c7f99] bg-[#103a5c] text-[11px] font-semibold tracking-[-0.3px]">
          32
        </span>
      </div>
      <span className="ml-[6px] h-10 w-px bg-[#5a6670]" />
    </div>
  </div>
);

export default function App() {
  return (
    <div className="flex h-[768px] w-[1366px] flex-col overflow-hidden bg-white font-['Noto_Sans',sans-serif]">
      <TabStrip />
      <Toolbar />
      <Bookmarks />
      <div className="flex h-[568px]">
        <div className="flex w-[1349px] flex-col">
          <ConsoleNav />
          <div className="flex h-[496px] overflow-hidden">
            <Sidebar />
            <Main />
          </div>
          <ConsoleFooter />
        </div>
        <PageScrollbar />
      </div>
      <Downloads />
      <Taskbar />
    </div>
  );
}
